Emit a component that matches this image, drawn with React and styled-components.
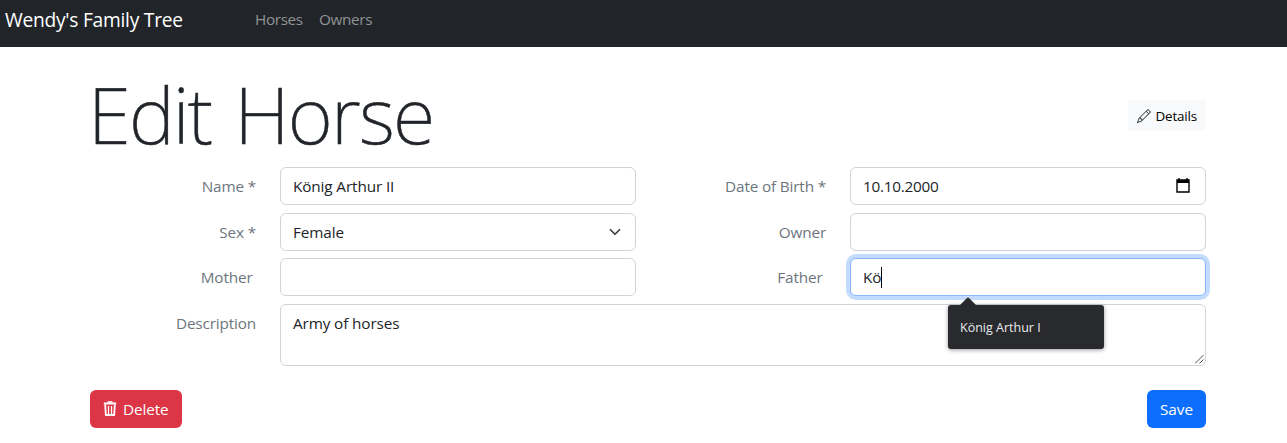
import React from "react";
import styled, { createGlobalStyle } from "styled-components";
import { BsPencil } from "react-icons/bs";

const Global = createGlobalStyle`
  * { box-sizing: border-box; }
  body { margin: 0; background: #fff; color: #212529; font: 400 15.3px/24px "Open Sans", sans-serif; letter-spacing: -0.1px; }
`;

const Navbar = styled.nav`
  display: flex;
  align-items: flex-start;
  height: 47px;
  padding: 8px 5px 0;
  background: #212529;
`;
const Brand = styled.a`
  width: 250px;
  color: #fff;
  font-size: 19.2px;
  letter-spacing: -0.25px;
  white-space: nowrap;
`;
const NavLink = styled.a`
  margin-top: -1px;
  margin-right: 16.2px;
  color: #909294;
  letter-spacing: -0.35px;
  white-space: nowrap;
`;
const Container = styled.main`
  width: 1116px;
  margin-left: 90px;
`;
const Header = styled.header`
  display: flex;
  justify-content: space-between;
  align-items: center;
  height: 120.2px;
  padding-top: 17px;
`;
const Title = styled.h1`
  margin: -4px 0 0 -2px;
  font: 200 77.5px/96px "Noto Sans", sans-serif;
  letter-spacing: -1.8px;
  word-spacing: 4.5px;
  -webkit-text-stroke: 0.5px #212529;
  white-space: nowrap;
`;
const Button = styled.button`
  display: flex;
  align-items: center;
  border: 0;
  font: inherit;
  letter-spacing: ${(p) => p.$ls || 0}px;
  height: 38px;
  padding: 0 13px;
  gap: 6px;
  border-radius: 6px;
  color: #fff;
  background: ${(p) => p.$bg};
  white-space: nowrap;
`;
const SmallButton = styled(Button)`
  height: 31px;
  padding: 0 9px;
  gap: 4px;
  border-radius: 4px;
  font-size: 13.4px;
  color: #000;
`;
const Form = styled.form`
  display: grid;
  grid-template-columns: 166px 356px 166px 356px;
  column-gap: 24px;
  row-gap: 7.6px;
`;
const Label = styled.label`
  display: block;
  padding-top: 7px;
  padding-right: ${(p) => p.$inset || 0}px;
  text-align: right;
  color: #6c757d;
  letter-spacing: -0.15px;
  white-space: nowrap;
`;
const Field = styled.div`
  position: relative;
  display: flex;
  justify-content: space-between;
  align-items: flex-start;
  height: ${(p) => (p.$tall ? 62 : 38)}px;
  grid-column: ${(p) => (p.$tall ? "2 / -1" : "auto")};
  padding: 6px 12px;
  border: 1px solid ${(p) => (p.$focus ? "#86b7fe" : "#ced4da")};
  border-radius: 6px;
  box-shadow: ${(p) => (p.$focus ? "0 0 0 4px #c2dbfe" : "none")};
  background: #fff;
`;
const Value = styled.span`
  white-space: nowrap;
  letter-spacing: ${(p) => p.$ls ?? -0.12}px;
`;
const Caret = styled.span`
  display: inline-block;
  width: 1px;
  height: 21px;
  background: #000;
  vertical-align: -5px;
`;
const Chevron = styled.svg`
  margin: 6px 0 0;
`;
const CalendarIcon = styled.svg`
  margin: 4px 3px 0 0;
`;
const Grip = styled.svg`
  position: absolute;
  right: 1px;
  bottom: 1px;
`;
const Popup = styled.div`
  position: absolute;
  z-index: 2;
  top: 46px;
  left: 97px;
  width: 156px;
  height: 44px;
  padding: 11px 12px;
  border-radius: 3px;
  background: #292a2e;
  color: #e8eaed;
  font-size: 12.5px;
  letter-spacing: 0;
  box-shadow: 0 1px 4px rgba(0, 0, 0, 0.4);
`;
const PopupArrow = styled.svg`
  position: absolute;
  top: -8px;
  left: 11px;
`;
const Actions = styled.footer`
  display: flex;
  justify-content: space-between;
  margin-top: 24px;
`;

const TrashIcon = () => (
  <svg width="14" height="16" viewBox="0 0 14 16" fill="none" stroke="#fff">
    <path d="M.8 2.5h12.4" strokeWidth="2" />
    <path d="M4.5 1h5" strokeWidth="1.6" />
    <path d="M2.2 3.5 2.8 14h8.4l.6-10.5" strokeWidth="1.8" strokeLinejoin="round" />
    <path d="M5.5 5v8M8.5 5v8" strokeWidth="1.3" />
  </svg>
);

export default function App() {
  return (
    <>
      <Global />
      <Navbar>
        <Brand>Wendy's Family Tree</Brand>
        <NavLink>Horses</NavLink>
        <NavLink>Owners</NavLink>
      </Navbar>
      <Container>
        <Header>
          <Title>Edit Horse</Title>
          <SmallButton $bg="#f8f9fa" $ls={-0.15}>
            <BsPencil size={14} color="#2b3a44" />
            <span>Details</span>
          </SmallButton>
        </Header>
        <Form>
          <Label>Name *</Label>
          <Field><Value>König Arthur II</Value></Field>
          <Label>Date of Birth *</Label>
          <Field>
            <Value $ls={-0.25}>10.10.2000</Value>
            <CalendarIcon width="14" height="15" viewBox="0 0 14 15">
              <path d="M1 2h12v12H1zM3 0v3M11 0v3" fill="none" stroke="#000" strokeWidth="1.4" />
              <path d="M1 2h12v3H1z" />
            </CalendarIcon>
          </Field>
          <Label>Sex *</Label>
          <Field>
            <Value>Female</Value>
            <Chevron width="16" height="12" viewBox="0 0 16 16">
              <path d="m2 5 6 6 6-6" fill="none" stroke="#343a40" strokeWidth="2.2" strokeLinecap="round" strokeLinejoin="round" />
            </Chevron>
          </Field>
          <Label>Owner</Label>
          <Field />
          <Label $inset={3.5}>Mother</Label>
          <Field />
          <Label $inset={3.5}>Father</Label>
          <Field $focus>
            <Value>Kö<Caret /></Value>
            <Popup>
              <PopupArrow width="18" height="9" viewBox="0 0 18 9">
                <path d="M0 9 8 1q1-1 2 0l8 8z" fill="#292a2e" />
              </PopupArrow>
              König Arthur I
            </Popup>
          </Field>
          <Label>Description</Label>
          <Field $tall>
            <Value>Army of horses</Value>
            <Grip width="9" height="9" viewBox="0 0 9 9">
              <path d="M0 8.5 8.5 0M4.5 8.5l4-4" stroke="#555" fill="none" />
            </Grip>
          </Field>
        </Form>
        <Actions>
          <Button $bg="#dc3545" $ls={-0.1}>
            <TrashIcon />
            <span>Delete</span>
          </Button>
          <Button $bg="#0d6efd">Save</Button>
        </Actions>
      </Container>
    </>
  );
}
